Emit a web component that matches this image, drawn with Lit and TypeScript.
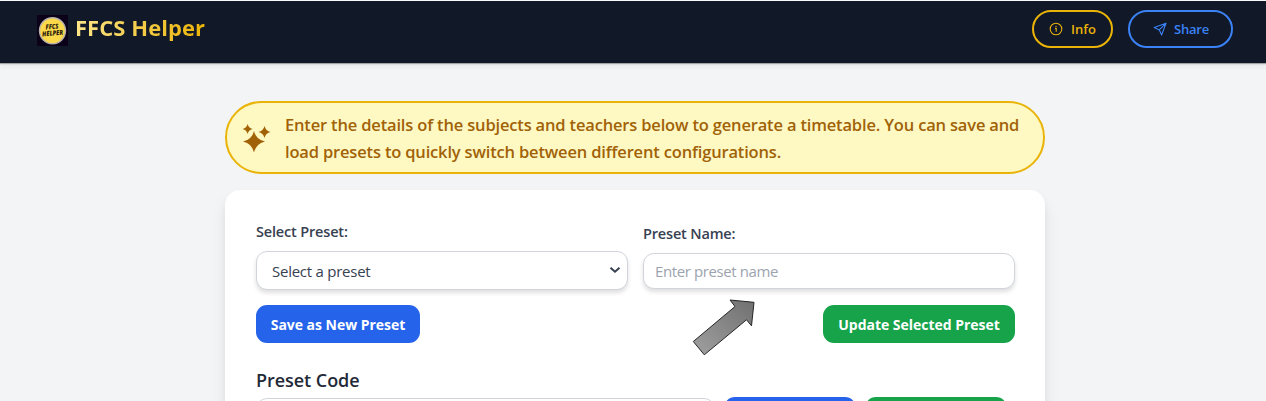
import { LitElement, html, css } from "lit";
import { customElement } from "lit/decorators.js";

@customElement("app-root")
export class AppRoot extends LitElement {
  static styles = css`
    :host { display: block; height: 401px; overflow: hidden; position: relative; background: #f3f4f6;
      font-family: "Open Sans", "Noto Sans", sans-serif; color: #374151; }
    * { box-sizing: border-box; }
    header { height: 63px; margin-top: 0; border-top: 1px solid #f9fafb; background: #111827; display: flex;
      align-items: flex-start; justify-content: space-between; padding: 0 33px 0 37px;
      box-shadow: 0 1px 1px rgba(0,0,0,.3), 0 3px 5px rgba(0,0,0,.06); }
    .brand { display: flex; padding-top: 14px; gap: 7px; }
    .logo { width: 31px; height: 31px; display: block; }
    h1 { margin: -4px 0 0; font-size: 22px; line-height: 32px; font-weight: 700; letter-spacing: .05px; white-space: nowrap;
      background: linear-gradient(to right, #fde68a, #eab308); -webkit-background-clip: text; background-clip: text; color: transparent; }
    nav { display: flex; gap: 15px; padding-top: 9px; }
    .pill { height: 38px; border: 2px solid #eab308; border-radius: 19px; background: none; color: #eab308;
      display: flex; align-items: center; gap: 8px; width: 81px; padding: 0 0 0 15px; font: 600 13px "Open Sans", sans-serif; white-space: nowrap; }
    .pill svg { width: 14px; height: 14px; flex: none; }
    .share { width: 105px; padding-left: 23px; gap: 7px; letter-spacing: -.2px; color: #3b82f6; border-color: #3b82f6; }
    main { width: 820px; margin: 38px 0 0 225px; }
    .notice { height: 73px; border: 2px solid #eab308; border-radius: 37px; background: #fef9c3; color: #a16207;
      display: flex; align-items: flex-start; padding: 8px 0 0 15px; gap: 14px; font-size: 16.5px; line-height: 27px; font-weight: 600; letter-spacing: -.17px; }
    .notice svg { width: 29px; height: 30px; margin-top: 12px; flex: none; }
    .notice p { margin: 0; white-space: nowrap; }
    .card { height: 400px; margin-top: 16px; background: #fff; border-radius: 15px; padding: 0 30px 0 31px;
      box-shadow: 0 10px 15px rgba(0,0,0,.08), 0 4px 6px rgba(0,0,0,.04); }
    .fields { display: grid; grid-template-columns: 372px 372px; gap: 15px; padding-top: 32px; height: 115px; }
    .field label { display: block; font-size: 14.5px; line-height: 20px; font-weight: 600; letter-spacing: -.17px; white-space: nowrap; }
    .field.name { padding-top: 2px; }
    .box { margin-top: 9px; height: 39px; border: 1px solid #d1d5db; border-radius: 11px; background: #fff; font-size: 15px; letter-spacing: -.25px;
      display: flex; align-items: center; justify-content: space-between; padding: 0 6px 0 15px; box-shadow: 0 3px 4px rgba(0,0,0,.13); white-space: nowrap; }
    .name .box { height: 36px; padding: 0 6px 0 11px; color: #9ca3af; letter-spacing: -.4px; }
    .box svg { width: 12px; height: 8px; margin-top: -2px; }
    .actions { display: flex; justify-content: space-between; }
    .btn { border: 0; height: 38px; border-radius: 11px; padding: 0; width: 164px; background: #2563eb; color: #fff; font: 700 14px "Open Sans", sans-serif; letter-spacing: -.03px; white-space: nowrap; }
    .btn.green { background: #16a34a; width: 192px; }
    h2 { margin: 25px 0 0; font-size: 18px; line-height: 25px; font-weight: 600; letter-spacing: -.05px; color: #1f2937; }
    .code { display: flex; align-items: flex-start; margin-top: 4px; }
    .area { width: 459px; height: 40px; border: 1px solid #d1d5db; border-radius: 11px; margin: 1px 9px 0 0; }
    .code .btn { width: 132px; }
    .code .green { width: 142px; margin-left: 9px; }
    .arrow { position: absolute; left: 690px; top: 296px; width: 68px; height: 62px; }
  `;

  render() {
    return html`
      <header>
        <div class="brand">
          <svg class="logo" viewBox="0 0 31 31">
            <rect width="31" height="31" fill="#0b0219" />
            <circle cx="15.5" cy="15.7" r="13" fill="#fcd94b" stroke="#b5b0ae" stroke-width="1.4" />
            <g transform="rotate(-5 15 15)" fill="#2b210b" font-family="Open Sans" font-weight="800" font-style="italic" text-anchor="middle">
              <text x="15.3" y="14" font-size="6.8" textLength="13" lengthAdjust="spacingAndGlyphs">FFCS</text>
              <text x="15.3" y="20.6" font-size="6.8" textLength="21" lengthAdjust="spacingAndGlyphs">HELPER</text>
            </g>
          </svg>
          <h1>FFCS Helper</h1>
        </div>
        <nav>
          <button class="pill">
            <svg viewBox="0 0 14 14" fill="none" stroke="currentColor" stroke-width="1.1"><circle cx="7" cy="7" r="5.8" /><path d="M6 6.4h1.2v3.3" /><circle cx="7" cy="4.3" r=".4" fill="currentColor" stroke-width=".5" /></svg>
            <span>Info</span>
          </button>
          <button class="pill share">
            <svg viewBox="0 0 14 14" fill="none" stroke="currentColor" stroke-width="1.1" stroke-linejoin="round"><path d="M13 1.2 1.2 5.6l5.1 2.3L8.6 13zM13 1.2 6.3 7.9" /></svg>
            <span>Share</span>
          </button>
        </nav>
      </header>
      <main>
        <section class="notice">
          <svg viewBox="0 0 29 30" fill="currentColor">
            <path d="M12 8Q14 16.5 23 18.5Q14 20.5 12 29.5Q10 20.5 1 18.5Q10 16.5 12 8Z" />
            <path d="M22.5 3Q23.7 7.8 28.6 9Q23.7 10.2 22.5 15Q21.3 10.2 16.4 9Q21.3 7.8 22.5 3Z" />
            <path d="M5.6 1Q6.5 5.1 10.6 6Q6.5 6.9 5.6 11Q4.7 6.9 .6 6Q4.7 5.1 5.6 1Z" />
          </svg>
          <p>Enter the details of the subjects and teachers below to generate a timetable. You can save and<br />load presets to quickly switch between different configurations.</p>
        </section>
        <section class="card">
          <div class="fields">
            <div class="field">
              <label>Select Preset:</label>
              <div class="box"><span>Select a preset</span>
                <svg viewBox="0 0 12 8" fill="none" stroke="#374151" stroke-width="2"><path d="m1.5 1.7 4.5 4 4.5-4" /></svg>
              </div>
            </div>
            <div class="field name">
              <label>Preset Name:</label>
              <div class="box"><span>Enter preset name</span></div>
            </div>
          </div>
          <div class="actions">
            <button class="btn">Save as New Preset</button>
            <button class="btn green">Update Selected Preset</button>
          </div>
          <h2>Preset Code</h2>
          <div class="code"><div class="area"></div><button class="btn"></button><button class="btn green"></button></div>
        </section>
      </main>
      <svg class="arrow" viewBox="0 0 68 62">
        <defs><linearGradient id="g" x1="0" y1="1" x2="1" y2="0"><stop stop-color="#a0a0a0" /><stop offset="1" stop-color="#707070" /></linearGradient></defs>
        <path d="M3.3 45.5 45 10.5l-5-6.5 24 2.3-2.5 23.5-5-6L14.3 58.8Z" fill="url(#g)" stroke="#262626" />
      </svg>
    `;
  }
}
